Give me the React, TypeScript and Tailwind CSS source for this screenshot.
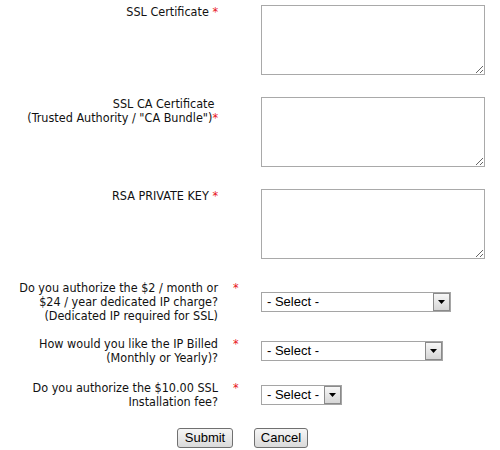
import React from "react";

const labelFont = "font-['DejaVu_Sans_Condensed','DejaVu_Sans',sans-serif] text-[12.5px] leading-[14px] text-[#111]";

function Req() {
  return <span className="text-[#e8141b]">*</span>;
}

function TextRow({ label, mt }: { label: React.ReactNode; mt: string }) {
  return (
    <div className={`flex items-start ${mt}`}>
      <div className={`w-[218px] pt-[0px] text-right ${labelFont}`}>{label}</div>
      <div className="w-[43px]" />
      <textarea className="h-[70px] w-[224px] resize border border-[#a9a9a9] bg-white" />
    </div>
  );
}

function SelectBox({ width }: { width: string }) {
  return (
    <div className={`flex h-[20px] ${width} items-stretch border border-[#a5a5a5] bg-white`}>
      <span className="flex-1 pl-[5px] font-['Liberation_Sans',Arial,sans-serif] text-[13px] leading-[18px] text-black">
        - Select -
      </span>
      <span className="flex w-[17px] items-center justify-center border border-[#8a8a8a] bg-gradient-to-b from-[#f7f7f7] to-[#d6d6d6]">
        <svg width="7" height="4" viewBox="0 0 7 4">
          <path d="M0 0H7L3.5 4Z" fill="#000" />
        </svg>
      </span>
    </div>
  );
}

function SelectRow({ lines, width, mt }: { lines: string[]; width: string; mt: string }) {
  return (
    <div className={`flex items-center ${mt}`}>
      <div className={`w-[218px] text-right ${labelFont}`}>
        {lines.map((l) => (
          <div key={l}>{l}</div>
        ))}
      </div>
      <div className={`w-[43px] self-start pl-[15px] ${labelFont}`}>
        <Req />
      </div>
      <SelectBox width={width} />
    </div>
  );
}

function Btn({ children, w }: { children: React.ReactNode; w: string }) {
  return (
    <button className={`h-[20px] ${w} rounded-[3px] border border-[#707070] bg-gradient-to-b from-[#f6f6f6] to-[#dadada] font-['Liberation_Sans',Arial,sans-serif] text-[13px] leading-[18px] text-black`}>
      {children}
    </button>
  );
}

export default function App() {
  return (
    <div className="h-[450px] w-[500px] bg-white pt-[5px]">
      <TextRow
        mt="mt-0"
        label={
          <>
            SSL Certificate <Req />
          </>
        }
      />
      <TextRow
        mt="mt-[22px]"
        label={
          <>
            SSL CA Certificate&nbsp;
            <br />
            (Trusted Authority / "CA Bundle")<Req />
          </>
        }
      />
      <TextRow
        mt="mt-[22px]"
        label={
          <>
            RSA PRIVATE KEY <Req />
          </>
        }
      />
      <SelectRow
        mt="mt-[22px]"
        width="w-[190px]"
        lines={["Do you authorize the $2 / month or", "$24 / year dedicated IP charge?", "(Dedicated IP required for SSL)"]}
      />
      <SelectRow
        mt="mt-[14px]"
        width="w-[182px]"
        lines={["How would you like the IP Billed", "(Monthly or Yearly)?"]}
      />
      <SelectRow
        mt="mt-[16px]"
        width="w-[81px]"
        lines={["Do you authorize the $10.00 SSL", "Installation fee?"]}
      />
      <div className="mt-[19px] flex pl-[177px]">
        <Btn w="w-[56px]">Submit</Btn>
        <div className="w-[21px]" />
        <Btn w="w-[54px]">Cancel</Btn>
      </div>
    </div>
  );
}
